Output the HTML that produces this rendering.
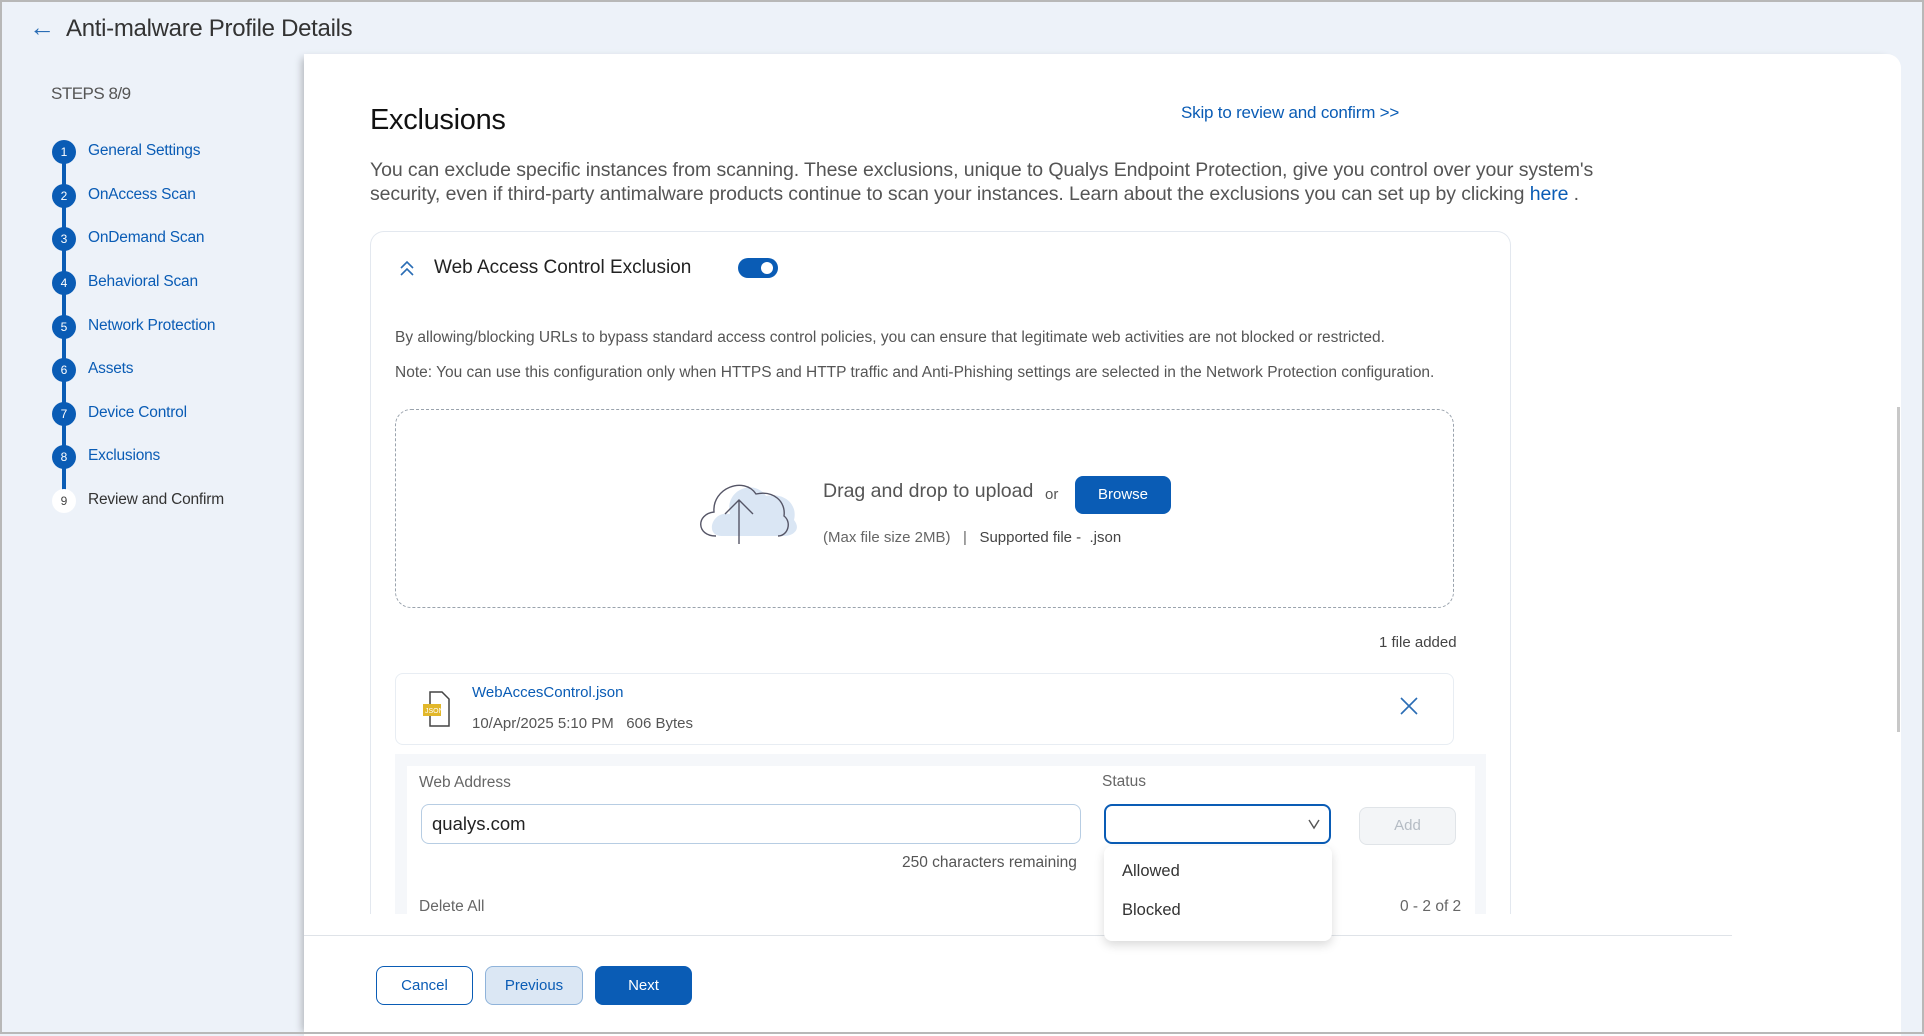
<!DOCTYPE html>
<html><head><meta charset="utf-8"><style>
*{box-sizing:border-box;margin:0;padding:0}
body{width:1924px;height:1034px;overflow:hidden;background:#edf2f9;font-family:"Liberation Sans",sans-serif;position:relative;color:#333}
#w{position:absolute;left:1px;top:2px;width:1924px;height:1034px}
.a{position:absolute;white-space:nowrap}
.step{position:absolute;left:51px;width:24px;height:24px;border-radius:50%;background:#0a5cb5;color:#fff;font-size:12px;text-align:center;line-height:24px}
.sl{position:absolute;left:87px;font-size:15.5px;color:#0a5cb5;letter-spacing:-0.2px}
.btn{position:absolute;border-radius:8px;font-size:15px;text-align:center}
</style></head><body><div id="w">
<div class="a" style="left:28px;top:10px;font-size:26px;color:#2a6db5">&#8592;</div>
<div class="a" style="left:65px;top:13px;font-size:24px;color:#333;letter-spacing:-0.3px">Anti-malware Profile Details</div>
<div class="a" style="left:50px;top:82px;font-size:17px;color:#555;letter-spacing:-0.5px">STEPS 8/9</div>
<div style="position:absolute;left:61px;top:150px;width:4px;height:345px;background:#0a5cb5"></div>
<div class="step" style="top:138px">1</div><div class="sl" style="top:140px">General Settings</div>
<div class="step" style="top:182px">2</div><div class="sl" style="top:184px">OnAccess Scan</div>
<div class="step" style="top:225px">3</div><div class="sl" style="top:227px">OnDemand Scan</div>
<div class="step" style="top:269px">4</div><div class="sl" style="top:271px">Behavioral Scan</div>
<div class="step" style="top:313px">5</div><div class="sl" style="top:315px">Network Protection</div>
<div class="step" style="top:356px">6</div><div class="sl" style="top:358px">Assets</div>
<div class="step" style="top:400px">7</div><div class="sl" style="top:402px">Device Control</div>
<div class="step" style="top:443px">8</div><div class="sl" style="top:445px">Exclusions</div>
<div class="step" style="top:487px;background:#fff;color:#444">9</div><div class="sl" style="top:489px;color:#333">Review and Confirm</div>

<div style="position:absolute;left:303px;top:52px;width:1597px;height:982px;background:#fff;border-top-right-radius:14px;box-shadow:-6px 0 8px -4px rgba(0,0,0,.25)"></div>
<div style="position:absolute;left:1896px;top:405px;width:3px;height:325px;background:#c8c8c8"></div>
<div class="a" style="left:369px;top:102px;font-size:29px;color:#111;letter-spacing:-0.3px">Exclusions</div>
<div class="a" style="left:1180px;top:101px;font-size:17px;color:#0a5cb5;letter-spacing:-0.2px">Skip to review and confirm &gt;&gt;</div>
<div class="a" style="left:369px;top:156px;font-size:19.5px;color:#555;line-height:24px;letter-spacing:-0.1px">You can exclude specific instances from scanning. These exclusions, unique to Qualys Endpoint Protection, give you control over your system's<br>security, even if third-party antimalware products continue to scan your instances. Learn about the exclusions you can set up by clicking <span style="color:#0a5cb5">here</span> .</div>

<div style="position:absolute;left:369px;top:229px;width:1141px;height:700px;border:1px solid #e3e8ef;border-bottom:none;border-radius:14px 14px 0 0"></div>
<div style="position:absolute;left:369px;top:912px;width:1142px;height:20px;background:#fff"></div>
<svg class="a" style="left:397px;top:257px" width="18" height="18" viewBox="0 0 18 18"><path d="M3 9l6-6 6 6M3 16l6-6 6 6" fill="none" stroke="#2a6db5" stroke-width="1.6"/></svg>
<div class="a" style="left:433px;top:255px;font-size:19px;color:#222">Web Access Control Exclusion</div>
<div style="position:absolute;left:737px;top:256px;width:40px;height:20px;border-radius:10px;background:#0a5cb5"></div>
<div style="position:absolute;left:760px;top:260px;width:12px;height:12px;border-radius:50%;background:#fff"></div>
<div class="a" style="left:394px;top:327px;font-size:15.5px;color:#555">By allowing/blocking URLs to bypass standard access control policies, you can ensure that legitimate web activities are not blocked or restricted.</div>
<div class="a" style="left:394px;top:362px;font-size:15.5px;color:#555">Note: You can use this configuration only when HTTPS and HTTP traffic and Anti-Phishing settings are selected in the Network Protection configuration.</div>

<div style="position:absolute;left:394px;top:407px;width:1059px;height:199px;border:1px dashed #9aa3ad;border-radius:16px"></div>
<svg class="a" style="left:693px;top:472px" width="108" height="70" viewBox="0 0 108 70"><path d="M28 62 C10 62 18 36 36 40 C30 16 60 4 72 22 C90 18 104 30 100 46 C108 56 98 62 90 62Z" fill="#dae6f4"/><path d="M22 62 C2 62 2 40 20 38 C18 14 50 2 62 20 C80 16 92 28 90 42 C98 48 94 62 84 62" fill="none" stroke="#556" stroke-width="1.4"/><path d="M45 70V26M31 40L45 26 59 40" fill="none" stroke="#556" stroke-width="1.4"/></svg>
<div class="a" style="left:822px;top:478px;font-size:19.5px;color:#555">Drag and drop to upload</div>
<div class="a" style="left:1044px;top:484px;font-size:15px;color:#555">or</div>
<div class="btn" style="left:1074px;top:474px;width:96px;height:38px;background:#0a5cb5;color:#fff;line-height:38px">Browse</div>
<div class="a" style="left:822px;top:527px;font-size:15px;color:#666">(Max file size 2MB) &nbsp; | &nbsp; <span style="color:#444">Supported file - &nbsp;.json</span></div>
<div class="a" style="left:1378px;top:632px;font-size:15px;color:#444">1 file added</div>

<div style="position:absolute;left:394px;top:671px;width:1059px;height:72px;border:1px solid #e8edf3;border-radius:8px"></div>
<svg class="a" style="left:420px;top:688px" width="32" height="38" viewBox="0 0 32 38"><path d="M9 2h12l7 7v27H9z" fill="#fff" stroke="#444" stroke-width="1.5"/><rect x="2" y="14" width="18" height="12" fill="#e2b72a"/><text x="4" y="23" font-size="7" fill="#fff" font-family="Liberation Sans">JSON</text></svg>
<div class="a" style="left:471px;top:682px;font-size:15px;color:#0a5cb5">WebAccesControl.json</div>
<div class="a" style="left:471px;top:713px;font-size:15px;color:#555">10/Apr/2025 5:10 PM &nbsp;&nbsp;606 Bytes</div>
<svg class="a" style="left:1398px;top:694px" width="20" height="20" viewBox="0 0 20 20"><path d="M2 2l16 16M18 2L2 18" stroke="#2a6db5" stroke-width="1.6"/></svg>

<div style="position:absolute;left:394px;top:752px;width:1091px;height:160px;background:#f5f7fa"></div>
<div style="position:absolute;left:406px;top:764px;width:1068px;height:148px;background:#fff"></div>
<div class="a" style="left:418px;top:772px;font-size:15.5px;color:#666">Web Address</div>
<div style="position:absolute;left:420px;top:802px;width:660px;height:40px;border:1px solid #b7cde3;border-radius:8px"></div>
<div class="a" style="left:431px;top:811px;font-size:18.5px;color:#222">qualys.com</div>
<div class="a" style="left:1101px;top:771px;font-size:15.5px;color:#666">Status</div>
<div style="position:absolute;left:1103px;top:802px;width:227px;height:40px;border:2px solid #0a5cb5;border-radius:8px"></div>
<svg class="a" style="left:1306px;top:815px" width="14" height="14" viewBox="0 0 14 14"><path d="M2 3l5 8 5-8" fill="none" stroke="#555" stroke-width="1.4"/></svg>
<div class="btn" style="left:1358px;top:805px;width:97px;height:38px;background:#f3f5f7;border:1px solid #e0e4e8;color:#b5bcc4;line-height:36px">Add</div>
<div class="a" style="left:901px;top:852px;font-size:15.5px;color:#555">250 characters remaining</div>
<div class="a" style="left:418px;top:896px;font-size:15.5px;color:#666">Delete All</div>
<div class="a" style="left:1399px;top:896px;font-size:15.5px;color:#666">0 - 2 of 2</div>

<div style="position:absolute;left:303px;top:933px;width:1428px;height:1px;background:#dfe3e8"></div>
<div style="position:absolute;left:1103px;top:844px;width:228px;height:95px;background:#fff;border-radius:8px;box-shadow:0 4px 10px rgba(0,0,0,.15)"></div>
<div class="a" style="left:1121px;top:860px;font-size:16.5px;color:#333">Allowed</div>
<div class="a" style="left:1121px;top:899px;font-size:16.5px;color:#333">Blocked</div>

<div class="btn" style="left:375px;top:964px;width:97px;height:39px;border:1px solid #0a5cb5;color:#0a5cb5;line-height:37px">Cancel</div>
<div class="btn" style="left:484px;top:964px;width:98px;height:39px;border:1px solid #8fb3da;background:#dbe7f4;color:#0a5cb5;line-height:37px">Previous</div>
<div class="btn" style="left:594px;top:964px;width:97px;height:39px;background:#0a5cb5;color:#fff;line-height:39px">Next</div>
</div>
<div style="position:absolute;left:0;top:0;width:1924px;height:1034px;border:2px solid #b8b8b8;pointer-events:none"></div>
</body></html>
